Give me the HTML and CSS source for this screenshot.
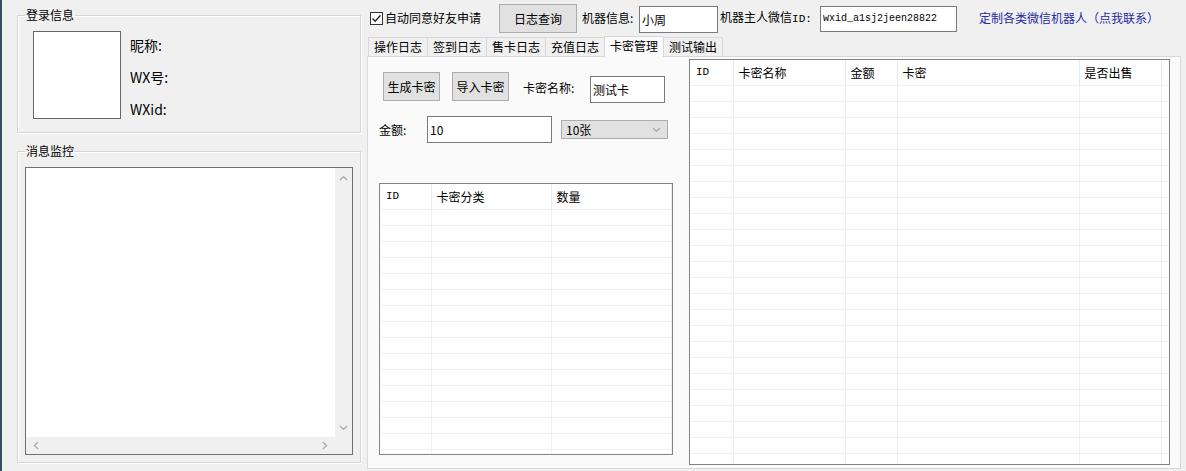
FILE: index.html
```html
<!DOCTYPE html>
<html lang="zh-CN">

<head>
  <meta charset="UTF-8" />
  <meta name="viewport" content="width=device-width, initial-scale=1.0" />
  <title>微信机器人</title>
  <link rel="stylesheet" href="styles.css">
</head>

<body>
  <div class="app">
    <div class="side">
      <fieldset class="group login">
        <legend>登录信息</legend>
        <div class="login-body">
          <div class="avatar"></div>
          <div class="info">
            <p>昵称:</p>
            <p>WX号:</p>
            <p>WXid:</p>
          </div>
        </div>
      </fieldset>
      <fieldset class="group monitor">
        <legend>消息监控</legend>
        <div class="monitor-body">
          <div class="msgbox">
            <div class="msgtext"></div>
            <div class="vbar">
              <svg width="9" height="6" viewBox="0 0 9 6"><path d="M1 5 L4.5 1.5 L8 5" /></svg>
              <svg width="9" height="6" viewBox="0 0 9 6"><path d="M1 1 L4.5 4.5 L8 1" /></svg>
            </div>
            <div class="hbar">
              <svg width="6" height="9" viewBox="0 0 6 9"><path d="M5 1 L1.5 4.5 L5 8" /></svg>
              <svg width="6" height="9" viewBox="0 0 6 9"><path d="M1 1 L4.5 4.5 L1 8" /></svg>
            </div>
            <div class="corner"></div>
          </div>
        </div>
      </fieldset>
    </div>

    <div class="main">
      <div class="toolbar">
        <label class="check">
          <span class="check-box">
            <svg width="11" height="11" viewBox="0 0 11 11"><path d="M1.5 5.5 L4.2 8.3 L9.5 2.2" /></svg>
          </span>
          自动同意好友申请
        </label>
        <button class="btn btn-log">日志查询</button>
        <span class="field-label label-robot">机器信息:</span>
        <input class="input input-robot" value="小周">
        <span class="field-label label-owner">机器主人微信<span class="mono">ID:</span></span>
        <input class="input input-owner mono" value="wxid_a1sj2jeen28822">
        <a class="contact" href="#">定制各类微信机器人（点我联系）</a>
      </div>

      <div class="tabs">
        <span class="tab">操作日志</span>
        <span class="tab">签到日志</span>
        <span class="tab">售卡日志</span>
        <span class="tab">充值日志</span>
        <span class="tab active">卡密管理</span>
        <span class="tab">测试输出</span>
      </div>

      <div class="panel">
        <div class="form">
          <div class="row row-actions">
            <button class="btn btn-sm">生成卡密</button>
            <button class="btn btn-sm btn-import">导入卡密</button>
            <span class="name-label">卡密名称:</span>
            <input class="input input-name" value="测试卡">
          </div>
          <div class="row row-amount">
            <span class="amount-label">金额:</span>
            <input class="input input-amount" value="10">
            <div class="select">
              <span>10张</span>
              <svg width="9" height="6" viewBox="0 0 9 6"><path d="M1 1 L4.5 4.5 L8 1" /></svg>
            </div>
          </div>
          <div class="list list-types" data-rows="16">
            <table>
              <colgroup>
                <col style="width: 51px">
                <col style="width: 120px">
                <col style="width: 120px">
                <col>
              </colgroup>
              <thead>
                <tr><th class="mono">ID</th><th>卡密分类</th><th>数量</th><th></th></tr>
              </thead>
              <tbody></tbody>
            </table>
          </div>
        </div>

        <div class="list list-cards" data-rows="24">
          <table>
            <colgroup>
              <col style="width: 43px">
              <col style="width: 112px">
              <col style="width: 52px">
              <col style="width: 182px">
              <col style="width: 82px">
              <col>
            </colgroup>
            <thead>
              <tr><th class="mono">ID</th><th>卡密名称</th><th>金额</th><th>卡密</th><th>是否出售</th><th></th></tr>
            </thead>
            <tbody></tbody>
          </table>
        </div>
      </div>
    </div>
  </div>

  <script>
    // 空白行, 画出列表的网格线
    document.querySelectorAll('.list').forEach(function (list) {
      let body = list.querySelector('tbody');
      let cols = list.querySelectorAll('col').length;
      let rows = +list.dataset.rows;
      for (let i = 0; i < rows; i++) {
        let tr = document.createElement('tr');
        for (let j = 0; j < cols; j++) {
          tr.appendChild(document.createElement('td'));
        }
        body.appendChild(tr);
      }
    });
  </script>
</body>

</html>
```

FILE: styles.css
```css
* {
  box-sizing: border-box;
}

body {
  margin: 0;
  width: 1186px;
  height: 471px;
  overflow: hidden;
  background-color: #f0f0f0;
  color: #000;
  font-family: "Noto Sans CJK SC", "Liberation Sans", sans-serif;
  font-size: 12px;
}

p {
  margin: 0;
}

.mono {
  font-family: "Liberation Mono", "Noto Sans CJK SC", monospace;
}

.app {
  display: flex;
  height: 471px;
  border-left: 2px solid #34505f;
}

/* 左边 */
.side {
  width: 363px;
  padding: 0 4px 0 15px;
  flex-shrink: 0;
}

.group {
  margin: 0;
  padding: 0;
  min-width: 0;
  border: 1px solid #d5d5d5;
  box-shadow: inset 1px 1px 0 #fff, 1px 1px 0 #fff;
}

.group legend {
  margin-left: 7px;
  padding: 0 1px;
  line-height: 16px;
  font-size: 12px;
}

.login {
  margin-top: 7px;
}

.login-body {
  display: flex;
  height: 109px;
  padding: 8px 0 13px 15px;
}

.avatar {
  width: 88px;
  height: 88px;
  border: 1px solid #666;
  background-color: #fff;
}

.info {
  margin: -2px 0 0 9px;
  font-size: 14px;
}

.info p {
  line-height: 32px;
  height: 32px;
}

.monitor {
  margin-top: 10px;
}

.monitor-body {
  padding: 8px 0 7px 7px;
}

.msgbox {
  width: 328px;
  height: 288px;
  border: 1px solid #6e6e6e;
  display: grid;
  grid-template-columns: 1fr 17px;
  grid-template-rows: 1fr 17px;
  background-color: #fff;
}

.vbar,
.hbar,
.corner {
  background-color: #f0f0f0;
}

.vbar {
  display: flex;
  flex-direction: column;
  justify-content: space-between;
  align-items: center;
  padding: 7px 0 6px;
}

.hbar {
  display: flex;
  justify-content: space-between;
  align-items: center;
  padding: 0 7px 0 7px;
}

.vbar svg,
.hbar svg,
.select svg {
  fill: none;
  stroke: #a6a6a6;
  stroke-width: 1.2;
}

/* 右边 */
.main {
  flex: 1;
  min-width: 0;
}

.toolbar {
  display: flex;
  align-items: center;
  height: 36px;
  padding-left: 5px;
  white-space: nowrap;
}

.check {
  display: flex;
  align-items: center;
  gap: 2px;
  line-height: 16px;
}

.check-box {
  width: 13px;
  height: 13px;
  border: 1px solid #333;
  background-color: #fff;
  display: flex;
}

.check-box svg {
  fill: none;
  stroke: #222;
  stroke-width: 1.3;
}

.btn {
  height: 29px;
  padding: 0;
  border: 1px solid #adadad;
  background-color: #e1e1e1;
  font: inherit;
  color: #000;
}

.btn-log {
  width: 78px;
  margin-left: 18px;
}

.field-label {
  line-height: 16px;
}

.label-robot {
  width: 57px;
  margin-left: 5px;
}

.label-owner {
  width: 100px;
  margin-left: 2px;
}

.label-owner .mono {
  font-size: 11px;
}

.input {
  height: 27px;
  padding: 0 2px;
  border: 1px solid #7a7a7a;
  background-color: #fff;
  font: inherit;
  font-size: 12px;
  color: #000;
  outline: none;
}

.input-robot {
  width: 79px;
  margin-top: 2px;
}

.input-owner {
  width: 137px;
  height: 26px;
  margin-top: 1px;
  font-family: "Liberation Mono", monospace;
  font-size: 10px;
}

.contact {
  margin-left: 22px;
  color: #1f2aa5;
  text-decoration: none;
  line-height: 16px;
}

.tabs {
  display: flex;
  align-items: flex-end;
  height: 20px;
  padding-left: 3px;
}

.tab {
  height: 19px;
  padding: 0 5px;
  margin-right: -1px;
  border: 1px solid #d9d9d9;
  border-bottom: none;
  line-height: 18px;
  background-color: #f0f0f0;
}

.tab.active {
  position: relative;
  z-index: 1;
  height: 21px;
  margin-bottom: -1px;
  line-height: 18px;
  background-color: #fafafa;
}

.panel {
  display: flex;
  height: 413px;
  margin: 0 5px 0 2px;
  border: 1px solid #d9d9d9;
  background-color: #fafafa;
}

.form {
  width: 321px;
  padding: 15px 0 0 11px;
  flex-shrink: 0;
}

.row {
  display: flex;
}

.row-actions {
  align-items: flex-start;
  margin-left: 4px;
}

.btn-sm {
  width: 57px;
}

.btn-import {
  margin-left: 12px;
}

.name-label {
  width: 67px;
  margin: 8px 0 0 14px;
  line-height: 16px;
}

.input-name {
  width: 75px;
  margin-top: 4px;
}

.row-amount {
  align-items: center;
  margin-top: 13px;
}

.amount-label {
  width: 48px;
  line-height: 16px;
}

.input-amount {
  width: 125px;
}

.select {
  width: 107px;
  height: 19px;
  margin-left: 9px;
  padding: 0 6px 0 4px;
  border: 1px solid #adadad;
  background-color: #e1e1e1;
  display: flex;
  align-items: center;
  justify-content: space-between;
  line-height: 16px;
}

.list {
  border: 1px solid #828282;
  background-color: #fff;
  overflow: hidden;
}

.list-types {
  width: 294px;
  height: 272px;
  margin-top: 40px;
}

.list-cards {
  width: 481px;
  height: 406px;
  margin-top: 2px;
}

.list table {
  width: 100%;
  table-layout: fixed;
  border-collapse: collapse;
}

.list th {
  height: 25px;
  padding: 0 0 0 5px;
  text-align: left;
  font-weight: normal;
  border-right: 1px solid #e8e8e8;
  border-bottom: 1px solid #f0f0f0;
  white-space: nowrap;
  overflow: hidden;
}

.list th.mono {
  padding-left: 6px;
  font-size: 11px;
}

.list td {
  height: 16px;
  padding: 0;
  border-right: 1px solid #f0f0f0;
  border-bottom: 1px solid #f0f0f0;
}

.list th:last-child,
.list td:last-child {
  border-right: none;
}
```
